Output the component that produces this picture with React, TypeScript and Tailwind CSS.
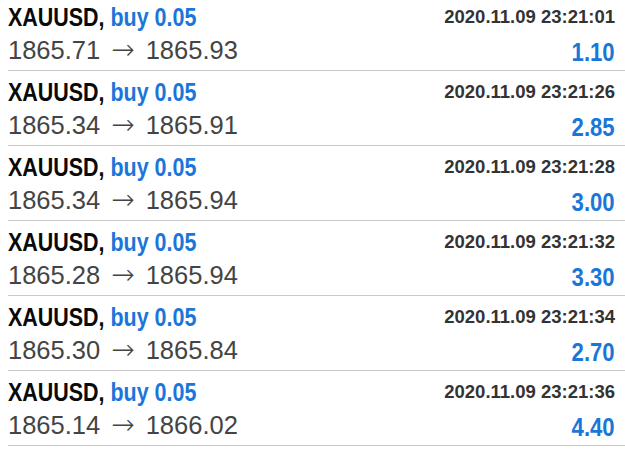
import React from 'react';

type Deal = {
  from: string;
  to: string;
  time: string;
  profit: string;
};

const deals: Deal[] = [
  { from: '1865.71', to: '1865.93', time: '2020.11.09 23:21:01', profit: '1.10' },
  { from: '1865.34', to: '1865.91', time: '2020.11.09 23:21:26', profit: '2.85' },
  { from: '1865.34', to: '1865.94', time: '2020.11.09 23:21:28', profit: '3.00' },
  { from: '1865.28', to: '1865.94', time: '2020.11.09 23:21:32', profit: '3.30' },
  { from: '1865.30', to: '1865.84', time: '2020.11.09 23:21:34', profit: '2.70' },
  { from: '1865.14', to: '1866.02', time: '2020.11.09 23:21:36', profit: '4.40' },
];

// no condensed face installed, so squeeze Liberation Sans bold horizontally
const cond = "font-['Liberation_Sans',Arial,sans-serif] font-bold text-[26px] leading-[30px] whitespace-nowrap";

const DealRow = ({ deal }: { deal: Deal }) => (
  <div className="ml-2 h-[75px] border-b border-[#c9c9c9] flex justify-between pr-[10px] pt-[6px]">
    <div className="flex flex-col">
      <div className={`${cond} text-[#0a0a0a] origin-left scale-x-[0.825]`}>
        XAUUSD, <span className="text-[#1a76d9]">buy 0.05</span>
      </div>
      <div className="mt-[3px] font-['Liberation_Sans',Arial,sans-serif] text-[25.5px] leading-[30px] text-[#444444] whitespace-nowrap">
        {deal.from}
        <span className="inline-block mx-[11px] font-['DejaVu_Sans',sans-serif] font-light text-[28px] leading-none">→</span>
        {deal.to}
      </div>
    </div>
    <div className="flex flex-col items-end">
      <div className="mt-[3px] font-['Liberation_Sans',Arial,sans-serif] text-[18.5px] leading-[24px] font-bold text-[#333333] whitespace-nowrap">
        {deal.time}
      </div>
      <div className={`mt-[8px] ${cond} text-[#1a76d9] origin-right scale-x-[0.85]`}>
        {deal.profit}
      </div>
    </div>
  </div>
);

export default function App() {
  return (
    <div className="w-[625px] h-[455px] bg-white overflow-hidden">
      <div className="-mt-1">
        {deals.map((d, i) => (
          <DealRow key={i} deal={d} />
        ))}
      </div>
    </div>
  );
}
